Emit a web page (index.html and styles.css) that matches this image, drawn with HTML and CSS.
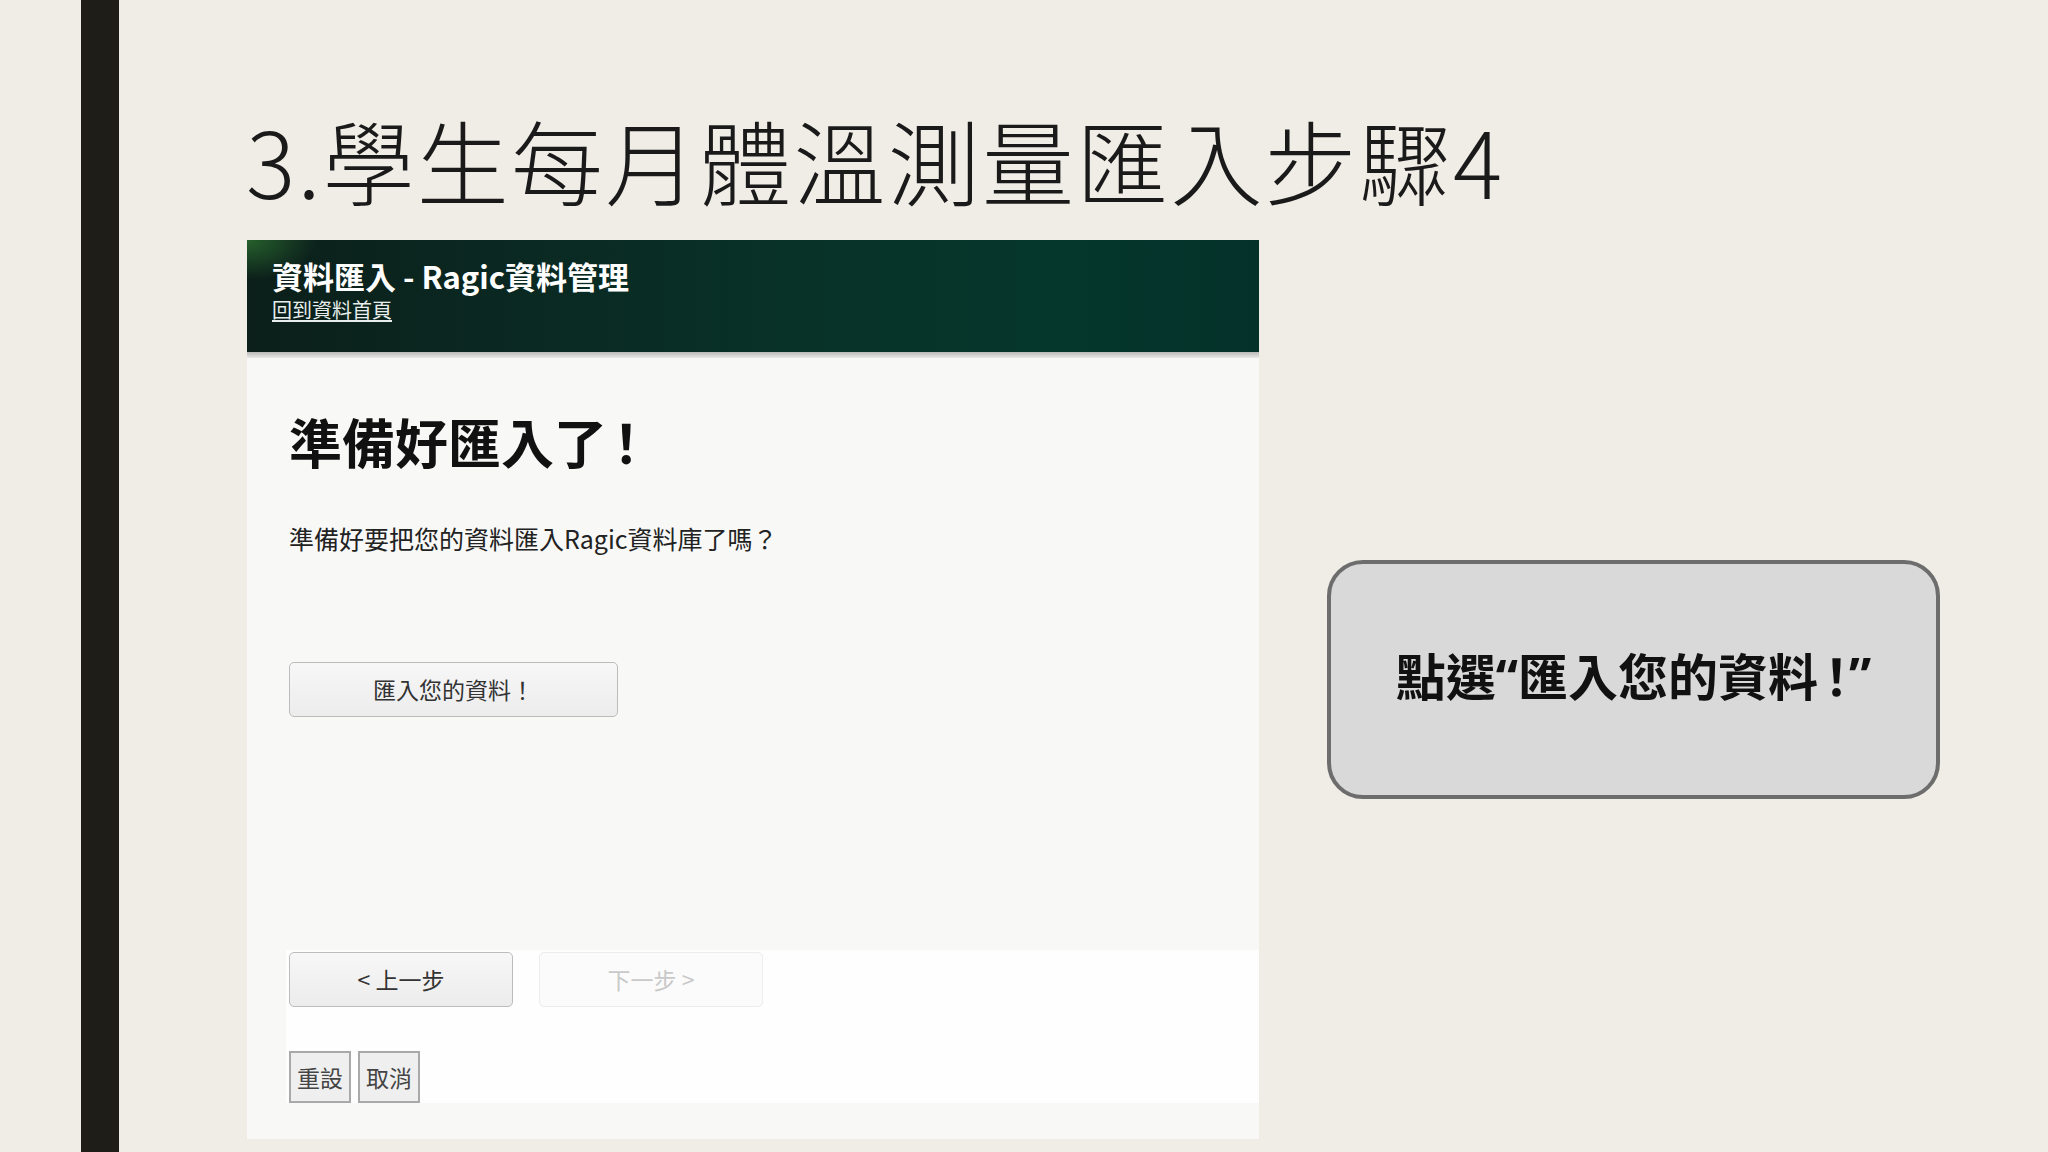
FILE: index.html
```html
<!DOCTYPE html>
<html lang="zh-Hant">
<head>
<meta charset="utf-8">
<title>3.學生每月體溫測量匯入步驟4</title>
<link rel="stylesheet" href="styles.css">
</head>
<body>
<div class="slide">
  <div class="bar"></div>
  <main class="content">
    <h1 class="slide-title">3.學生每月體溫測量匯入步驟4</h1>
    <div class="row">
      <section class="shot">
        <header class="shot-head">
          <div class="shot-title">資料匯入 - Ragic資料管理</div>
          <a class="shot-link">回到資料首頁</a>
        </header>
        <div class="shot-shadow"></div>
        <div class="shot-body">
          <h2 class="ready">準備好匯入了<span class="bang">！</span></h2>
          <p class="ask">準備好要把您的資料匯入Ragic資料庫了嗎？</p>
          <div class="btn btn-import">匯入您的資料！</div>
          <div class="footer-box">
            <div class="nav">
              <div class="btn btn-nav">&lt; 上一步</div>
              <div class="btn btn-nav disabled">下一步 &gt;</div>
            </div>
            <div class="small-btns">
              <div class="btn btn-small">重設</div>
              <div class="btn btn-small">取消</div>
            </div>
          </div>
        </div>
      </section>
      <div class="callout">點選“匯入您的資料<span class="bang">！</span>”</div>
    </div>
  </main>
</div>
</body>
</html>
```
FILE: styles.css
```css
* { box-sizing: border-box; }
html, body {
  margin: 0;
  padding: 0;
  width: 2048px;
  height: 1152px;
  overflow: hidden;
  background: #f0ece6;
  font-family: "Noto Sans CJK TC", "Noto Sans", sans-serif;
}
.slide {
  display: flex;
  height: 1152px;
  padding-left: 81px;
}
.bar {
  width: 38px;
  flex: none;
  background: #1e1d17;
}
.content {
  flex: 1;
  padding-left: 127px;
  padding-top: 116px;
}
.slide-title {
  margin: -3px 0 0;
  height: 92px;
  font-size: 92px;
  line-height: 1;
  font-weight: 300;
  letter-spacing: 2.2px;
  color: #1a1a1a;
  white-space: nowrap;
}
.row {
  display: flex;
  align-items: flex-start;
  margin-top: 35px;
}
.shot {
  width: 1012px;
  height: 899px;
  margin-left: 1px;
  flex: none;
  background: #f8f8f7;
  display: flex;
  flex-direction: column;
}
.shot-head {
  height: 112px;
  padding: 20px 0 0 25px;
  background:
    radial-gradient(ellipse 70px 40px at 0 0, rgba(60,150,60,0.55), rgba(60,150,60,0) 100%),
    linear-gradient(90deg, #0c1f1a 0%, #0a2821 25%, #083228 55%, #05372c 80%, #04322a 100%);
  color: #fff;
}
.shot-title {
  font-size: 31px;
  line-height: 1;
  font-weight: 700;
  white-space: nowrap;
}
.shot-link {
  display: block;
  margin-top: 9px;
  font-size: 20px;
  line-height: 1;
  color: #e8eeec;
  text-decoration: underline;
  text-underline-offset: 2px;
}
.shot-shadow {
  height: 6px;
  background: linear-gradient(180deg, #b9b9b9, #e9e9e8);
}
.shot-body {
  flex: 1;
  padding: 57px 0 0 42px;
  display: flex;
  flex-direction: column;
  align-items: flex-start;
}
.ready {
  margin: 0;
  font-size: 53px;
  line-height: 1;
  font-weight: 700;
  color: #111;
}
.bang {
  font-feature-settings: "palt";
  padding-left: 6px;
}
.ask {
  margin: 58px 0 0;
  font-size: 25px;
  line-height: 1;
  color: #222;
}
.btn {
  display: flex;
  align-items: center;
  justify-content: center;
  border: 1px solid #bcbcbc;
  border-radius: 5px;
  background: linear-gradient(180deg, #f7f7f7, #ececec);
  color: #333;
  font-size: 23px;
  line-height: 1;
}
.btn-import {
  margin-top: 111px;
  width: 329px;
  height: 55px;
}
.footer-box {
  margin-top: 233px;
  margin-left: -3px;
  align-self: stretch;
  height: 153px;
  background: #fefefe;
  padding: 2px 0 0 3px;
}
.nav {
  display: flex;
  gap: 26px;
}
.btn-nav {
  width: 224px;
  height: 55px;
}
.btn-nav.disabled {
  border-color: #ececec;
  background: #fbfbfb;
  color: #c9c9c9;
}
.small-btns {
  display: flex;
  gap: 7px;
  margin-top: 44px;
}
.btn-small {
  width: 62px;
  height: 52px;
  border-radius: 0;
  border: 2px solid #a9a9a9;
  background: #efefef;
  color: #444;
}
.callout {
  margin-left: 68px;
  margin-top: 320px;
  width: 613px;
  height: 239px;
  padding-bottom: 10px;
  border: 4px solid #6d6d6d;
  border-radius: 36px;
  background: #d9d9d9;
  display: flex;
  align-items: center;
  justify-content: center;
  font-family: "Noto Sans", "Noto Sans CJK TC", sans-serif;
  font-size: 50px;
  font-weight: 700;
  color: #111;
  white-space: nowrap;
}
```
